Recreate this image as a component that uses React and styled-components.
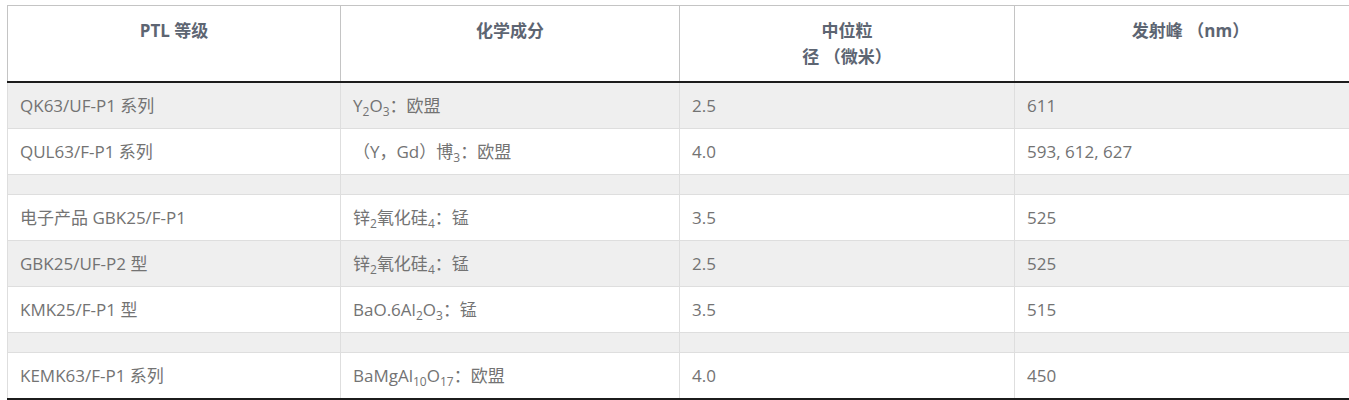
import React from 'react'
import styled, { createGlobalStyle } from 'styled-components'

const GlobalStyle = createGlobalStyle`
  html, body {
    margin: 0;
    padding: 0;
    background: #fff;
    overflow: hidden;
  }
  body {
    font-family: "Open Sans", "Noto Sans CJK SC", sans-serif;
  }
`

const Wrapper = styled.div`
  padding: 5px 0 0 7px;
`

const Table = styled.table`
  width: 1360px;
  border-collapse: collapse;
  table-layout: fixed;
  font-size: 17px;
  color: #737373;
`

const HeadCell = styled.th`
  border: 1px solid #c4c4c4;
  border-bottom: 2px solid #1c1c1c;
  padding: 12px 12px 11px;
  line-height: 26px;
  font-weight: 700;
  color: #5d6572;
  text-align: center;
  vertical-align: top;
  height: 52px;
`

const Body = styled.tbody`
  tr:last-child td {
    border-bottom: 2px solid #1c1c1c;
  }
`

const Row = styled.tr`
  background: ${p => (p.$striped ? '#efefef' : '#fff')};
`

const Cell = styled.td`
  border: 1px solid #dedede;
  padding: ${p => (p.$spacer ? '0 12px' : '10px 12px')};
  height: ${p => (p.$spacer ? '19px' : '25px')};
  line-height: 25px;
  vertical-align: middle;
  white-space: nowrap;
`

const Sub = styled.sub`
  font-size: 12px;
  line-height: 0;
  vertical-align: -4px;
`

const rows = [
  ['QK63/UF-P1 系列', <>Y<Sub>2</Sub>O<Sub>3</Sub>：欧盟</>, '2.5', '611'],
  ['QUL63/F-P1 系列', <>（Y，Gd）博<Sub>3</Sub>：欧盟</>, '4.0', '593, 612, 627'],
  null,
  ['电子产品 GBK25/F-P1', <>锌<Sub>2</Sub>氧化硅<Sub>4</Sub>：锰</>, '3.5', '525'],
  ['GBK25/UF-P2 型', <>锌<Sub>2</Sub>氧化硅<Sub>4</Sub>：锰</>, '2.5', '525'],
  ['KMK25/F-P1 型', <>BaO.6Al<Sub>2</Sub>O<Sub>3</Sub>：锰</>, '3.5', '515'],
  null,
  ['KEMK63/F-P1 系列', <>BaMgAl<Sub>10</Sub>O<Sub>17</Sub>：欧盟</>, '4.0', '450']
]

const App = () => (
  <Wrapper>
    <GlobalStyle />
    <Table>
      <colgroup>
        <col style={{ width: 333 }} />
        <col style={{ width: 339 }} />
        <col style={{ width: 335 }} />
        <col />
      </colgroup>
      <thead>
        <tr>
          <HeadCell>PTL 等级</HeadCell>
          <HeadCell>化学成分</HeadCell>
          <HeadCell>中位粒<br />径 （微米）</HeadCell>
          <HeadCell>发射峰 （nm）</HeadCell>
        </tr>
      </thead>
      <Body>
        {rows.map((row, i) => (
          <Row key={i} $striped={i % 2 === 0}>
            {row
              ? row.map((cell, j) => <Cell key={j}>{cell}</Cell>)
              : [0, 1, 2, 3].map(j => <Cell key={j} $spacer />)}
          </Row>
        ))}
      </Body>
    </Table>
  </Wrapper>
)

export default App
